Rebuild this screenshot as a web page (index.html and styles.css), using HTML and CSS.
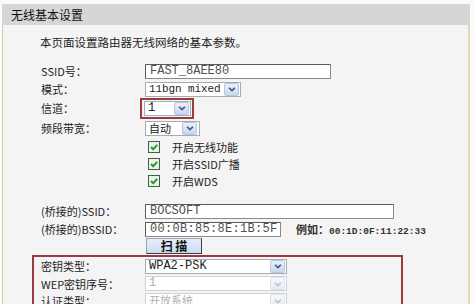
FILE: index.html
```html
<!DOCTYPE html>
<html lang="zh-CN">
<head>
<meta charset="utf-8">
<title>无线基本设置</title>
<link rel="stylesheet" href="styles.css">
</head>
<body>
<div class="frame">
  <div class="hd">无线基本设置</div>
  <div class="bd">
    <div class="intro">本页面设置路由器无线网络的基本参数。</div>

    <div class="row r-first">
      <span class="lbl">SSID号：</span>
      <span class="inp w-ssid">FAST_8AEE80</span>
    </div>
    <div class="row">
      <span class="lbl">模式：</span>
      <span class="sel w-mode"><span class="val mode-val">11bgn mixed</span><span class="btn"><svg viewBox="0 0 14 12" width="14" height="12"><path d="M3.5 4.5 L7 8 L10.5 4.5" fill="none" stroke="#3d5a8a" stroke-width="2"/></svg></span></span>
    </div>
    <div class="row row-ch">
      <span class="lbl">信道：</span>
      <span class="hl"><span class="sel w-ch"><span class="val">1</span><span class="btn"><svg viewBox="0 0 14 12" width="14" height="12"><path d="M3.5 4.5 L7 8 L10.5 4.5" fill="none" stroke="#3d5a8a" stroke-width="2"/></svg></span></span></span>
    </div>
    <div class="row row-bw">
      <span class="lbl">频段带宽：</span>
      <span class="sel w-bw"><span class="val cjk">自动</span><span class="btn"><svg viewBox="0 0 14 12" width="14" height="12"><path d="M3.5 4.5 L7 8 L10.5 4.5" fill="none" stroke="#3d5a8a" stroke-width="2"/></svg></span></span>
    </div>

    <div class="row chk">
      <span class="lbl"></span>
      <span class="cb"><svg viewBox="0 0 12 12" width="12" height="12"><rect x="0.5" y="0.5" width="11" height="11" fill="#eef2ea" stroke="#3f5f4a"/><path d="M3 6 L5.2 8.2 L9.2 3.8" fill="none" stroke="#1f9e2a" stroke-width="2"/></svg></span>
      <span class="cbt">开启无线功能</span>
    </div>
    <div class="row chk">
      <span class="lbl"></span>
      <span class="cb"><svg viewBox="0 0 12 12" width="12" height="12"><rect x="0.5" y="0.5" width="11" height="11" fill="#eef2ea" stroke="#3f5f4a"/><path d="M3 6 L5.2 8.2 L9.2 3.8" fill="none" stroke="#1f9e2a" stroke-width="2"/></svg></span>
      <span class="cbt">开启SSID广播</span>
    </div>
    <div class="row chk">
      <span class="lbl"></span>
      <span class="cb"><svg viewBox="0 0 12 12" width="12" height="12"><rect x="0.5" y="0.5" width="11" height="11" fill="#eef2ea" stroke="#3f5f4a"/><path d="M3 6 L5.2 8.2 L9.2 3.8" fill="none" stroke="#1f9e2a" stroke-width="2"/></svg></span>
      <span class="cbt">开启WDS</span>
    </div>

    <div class="row r-bridge">
      <span class="lbl">(桥接的)SSID：</span>
      <span class="inp w-bssid">BOCSOFT</span>
    </div>
    <div class="row">
      <span class="lbl">(桥接的)BSSID：</span>
      <span class="inp w-mac">00:0B:85:8E:1B:5F</span>
      <span class="ex">例如：<span class="mono">00:1D:0F:11:22:33</span></span>
    </div>
    <div class="row row-scan">
      <span class="lbl"></span>
      <span class="scan">扫 描</span>
    </div>

    <div class="redbox">
      <div class="row">
        <span class="lbl">密钥类型：</span>
        <span class="sel w-key"><span class="val key-val">WPA2-PSK</span><span class="btn"><svg viewBox="0 0 14 12" width="14" height="12"><path d="M3.5 4.5 L7 8 L10.5 4.5" fill="none" stroke="#3d5a8a" stroke-width="2"/></svg></span></span>
      </div>
      <div class="row row-sm">
        <span class="lbl">WEP密钥序号：</span>
        <span class="sel w-key dis"><span class="val">1</span><span class="btn"><svg viewBox="0 0 14 12" width="14" height="12"><path d="M3.5 4.5 L7 8 L10.5 4.5" fill="none" stroke="#b9c4d6" stroke-width="2"/></svg></span></span>
      </div>
      <div class="row row-sm">
        <span class="lbl">认证类型：</span>
        <span class="sel w-key dis"><span class="val cjk">开放系统</span><span class="btn"><svg viewBox="0 0 14 12" width="14" height="12"><path d="M3.5 4.5 L7 8 L10.5 4.5" fill="none" stroke="#b9c4d6" stroke-width="2"/></svg></span></span>
      </div>
    </div>
  </div>
</div>
</body>
</html>
```

FILE: styles.css
```css
html, body {
  margin: 0;
  height: 304px;
  overflow: hidden;
  background: #fbfbfb;
}
body {
  font-family: "Noto Sans CJK SC", "Liberation Sans", sans-serif;
  font-size: 11px;
  color: #1e1e1e;
}
.frame {
  margin: 4px 0 0 2px;
  width: 468px;
}
.hd {
  height: 21px;
  line-height: 21px;
  background: #d6d6d6;
  padding-left: 9px;
  font-size: 12px;
  color: #111;
}
.bd {
  background: #f4f4f4;
  border-left: 1px solid #dccb9e;
  border-right: 2px solid #e6d8b3;
  height: 300px;
  padding: 8px 0 0 38px;
  box-sizing: border-box;
}
.intro {
  height: 18px;
  line-height: 18px;
  margin-left: -1px;
  font-size: 11.5px;
}
.row {
  display: flex;
  align-items: center;
  height: 18px;
}
.r-first { margin-top: 11px; }
.row-ch, .row-bw { height: 20px; }
.chk { height: 17px; }
.r-bridge { margin-top: 13px; }
.row-scan { height: 16px; align-items: flex-start; }
.row-sm { height: 17px; }
.lbl {
  width: 104px;
  flex: none;
  white-space: nowrap;
}
.inp {
  box-sizing: border-box;
  height: 15px;
  line-height: 13px;
  background: #fff;
  border: 1px solid #8a8a8a;
  border-top-color: #5a5a5a;
  border-left-color: #5a5a5a;
  padding-left: 4px;
  font-family: "Liberation Mono", monospace;
  font-size: 12px;
  color: #505050;
  white-space: nowrap;
  overflow: hidden;
}
.w-ssid { width: 186px; }
.w-bssid { width: 249px; }
.w-mac { width: 136px; letter-spacing: 0.3px; }
.sel {
  box-sizing: border-box;
  display: flex;
  align-items: center;
  height: 15px;
  background: #fff;
  border: 1px solid #a5acb5;
  font-family: "Liberation Mono", monospace;
  font-size: 12px;
  color: #222;
}
.sel .val {
  flex: 1;
  padding-left: 3px;
  line-height: 13px;
  white-space: nowrap;
}
.sel .mode-val { font-size: 11px; letter-spacing: -0.1px; }
.sel .key-val { color: #222; font-weight: normal; }
.sel .cjk {
  font-family: "Noto Sans CJK SC", sans-serif;
  font-size: 11px;
  line-height: 13px;
}
.btn {
  flex: none;
  width: 15px;
  height: 13px;
  box-sizing: border-box;
  border: 1px solid #b8c7df;
  border-radius: 2px;
  background: linear-gradient(#eaf0fb, #c9d7f0);
  display: flex;
  align-items: center;
  justify-content: center;
  margin-right: 1px;
}
.btn svg { width: 12px; height: 10px; }
.w-mode { width: 96px; }
.w-ch { width: 47px; }
.w-bw { width: 55px; }
.w-bw .btn { margin-right: 2px; }
.w-key { width: 142px; }
.hl {
  margin-left: -5px;
  border: 2px solid #9c3a40;
  padding: 1px 1px 1px 2px;
  display: flex;
}
.dis {
  border-color: #cfd3d8;
  color: #b4b4b4;
}
.dis .val { color: #b0b0b0; }
.dis .btn {
  border-color: #dde3ec;
  background: linear-gradient(#f7f9fc, #e6ebf3);
}
.cb {
  width: 12px;
  height: 12px;
  margin-left: 3px;
  display: flex;
}
.cbt {
  margin-left: 12px;
  font-size: 11px;
}
.ex {
  margin-left: 15px;
  font-weight: bold;
  color: #333;
  white-space: nowrap;
}
.ex .mono {
  font-family: "Liberation Mono", monospace;
  font-size: 9.5px;
  font-weight: bold;
  color: #333;
}
.scan {
  box-sizing: border-box;
  margin-left: 1px;
  width: 56px;
  height: 16px;
  line-height: 14px;
  text-align: center;
  background: linear-gradient(#e6eefb, #cddbf1);
  border: 1px solid #9aa3ad;
  border-right-color: #3c3c3c;
  border-bottom-color: #3c3c3c;
  font-weight: bold;
  font-size: 12px;
  color: #111;
}
.redbox {
  margin-top: 1px;
  margin-left: -9px;
  width: 371px;
  height: 80px;
  box-sizing: border-box;
  border: 2px solid #9c3a40;
  padding-left: 7px;
}
```
